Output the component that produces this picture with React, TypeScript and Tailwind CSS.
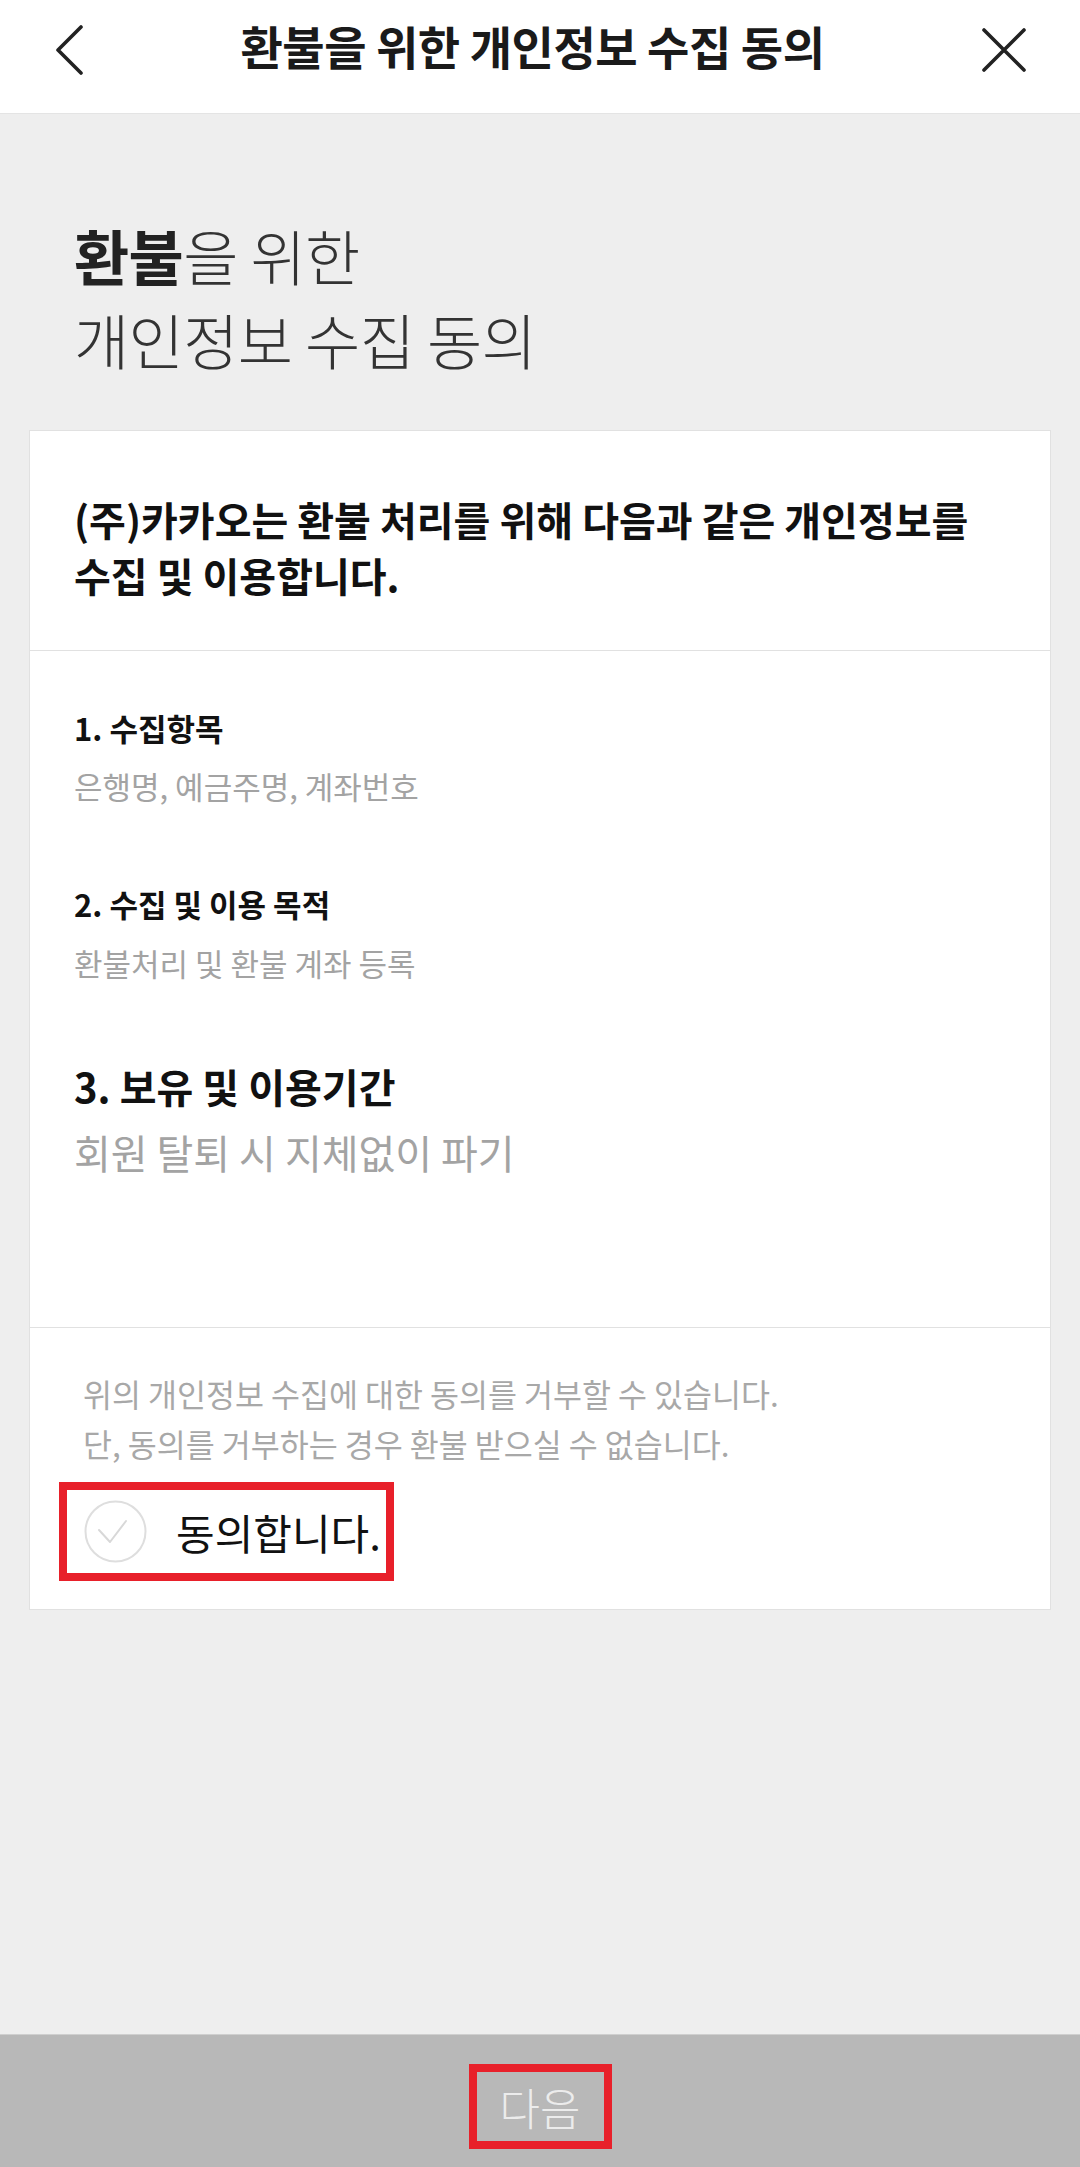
import React from "react";

const font = { fontFamily: '"Noto Sans CJK KR", "Noto Sans", sans-serif' };

export default function App() {
  return (
    <div style={font} className="min-h-[2167px] w-[1080px] bg-[#eeeeee] flex flex-col">
      {/* Header */}
      <div className="h-[114px] bg-white border-b border-[#e4e4e4] flex items-start justify-between px-[55px] pt-[12px] shrink-0">
        <svg width="32" height="54" viewBox="0 0 32 54" className="mt-[13px] -ml-[1px]">
          <path d="M27 2 L4 25 L27 48" fill="none" stroke="#222" strokeWidth="3.6" strokeLinecap="round" strokeLinejoin="round" />
        </svg>
        <h1 className="text-[46px] leading-[66px] font-bold text-[#1a1a1a] tracking-[-0.01em] whitespace-nowrap">
          환불을 위한 개인정보 수집 동의
        </h1>
        <svg width="50" height="50" viewBox="0 0 50 50" className="mt-[14px] -mr-[4px]">
          <path d="M5 4 L45 44 M45 4 L5 44" fill="none" stroke="#222" strokeWidth="3.6" strokeLinecap="round" />
        </svg>
      </div>

      {/* Page heading */}
      <div className="pl-[74px] pt-[99px] text-[60px] leading-[84px] tracking-[-0.01em] text-[#333]">
        <div>
          <span className="font-bold text-[#222]">환불</span>
          <span className="font-light">을 위한</span>
        </div>
        <div className="font-light">개인정보 수집 동의</div>
      </div>

      {/* Card */}
      <div className="mx-[29px] mt-[49px] bg-white border border-[#e1e1e1]">
        <div className="pl-[44px] pr-[20px] pt-[60px] pb-[47px] border-b border-[#e1e1e1]">
          <p className="text-[40px] leading-[56px] font-bold text-[#111] whitespace-nowrap">
            (주)카카오는 환불 처리를 위해 다음과 같은 개인정보를
            <br />
            수집 및 이용합니다.
          </p>
        </div>

        <div className="pl-[44px] pr-[30px] pt-[57px] pb-[150px] border-b border-[#e1e1e1]">
          <h3 className="text-[31px] leading-[40px] font-bold text-[#111]">1. 수집항목</h3>
          <p className="mt-[18px] text-[31px] leading-[40px] text-[#a3a3a3]">은행명, 예금주명, 계좌번호</p>
          <h3 className="mt-[78px] text-[31px] leading-[40px] font-bold text-[#111]">2. 수집 및 이용 목적</h3>
          <p className="mt-[19px] text-[31px] leading-[40px] text-[#a3a3a3]">환불처리 및 환불 계좌 등록</p>
          <h3 className="mt-[80px] text-[40px] leading-[46px] font-bold text-[#111]">3. 보유 및 이용기간</h3>
          <p className="mt-[18px] text-[40px] leading-[50px] text-[#a3a3a3]">회원 탈퇴 시 지체없이 파기</p>
        </div>

        <div className="pl-[29px] pt-[40px] pb-[28px]">
          <p className="ml-[24px] text-[31.5px] leading-[50px] text-[#a8a8a8] whitespace-nowrap">
            위의 개인정보 수집에 대한 동의를 거부할 수 있습니다.
            <br />
            단, 동의를 거부하는 경우 환불 받으실 수 없습니다.
          </p>
          <div className="mt-[14px] w-[335px] h-[99px] border-[8px] border-[#e8202a] flex items-center pl-[17px]">
            <svg width="63" height="63" viewBox="0 0 63 63" className="shrink-0">
              <circle cx="31.5" cy="31.5" r="30" fill="none" stroke="#dedede" strokeWidth="2" />
              <path d="M15 30 L26 42 L42 21" fill="none" stroke="#d8d8d8" strokeWidth="2" strokeLinecap="round" strokeLinejoin="round" />
            </svg>
            <span className="ml-[29px] text-[42px] leading-[60px] text-[#111] whitespace-nowrap">동의합니다.</span>
          </div>
        </div>
      </div>

      <div className="flex-1" />

      {/* Bottom bar */}
      <div className="h-[133px] shrink-0 bg-[#b8b8b8] border-t border-[#cfcfcf] flex justify-center pt-[29px]">
        <div className="w-[143px] h-[85px] border-[8px] border-[#e8202a] flex items-center justify-center">
          <span className="text-[44px] leading-[50px] font-light text-[#ececec] whitespace-nowrap">다음</span>
        </div>
      </div>
    </div>
  );
}
